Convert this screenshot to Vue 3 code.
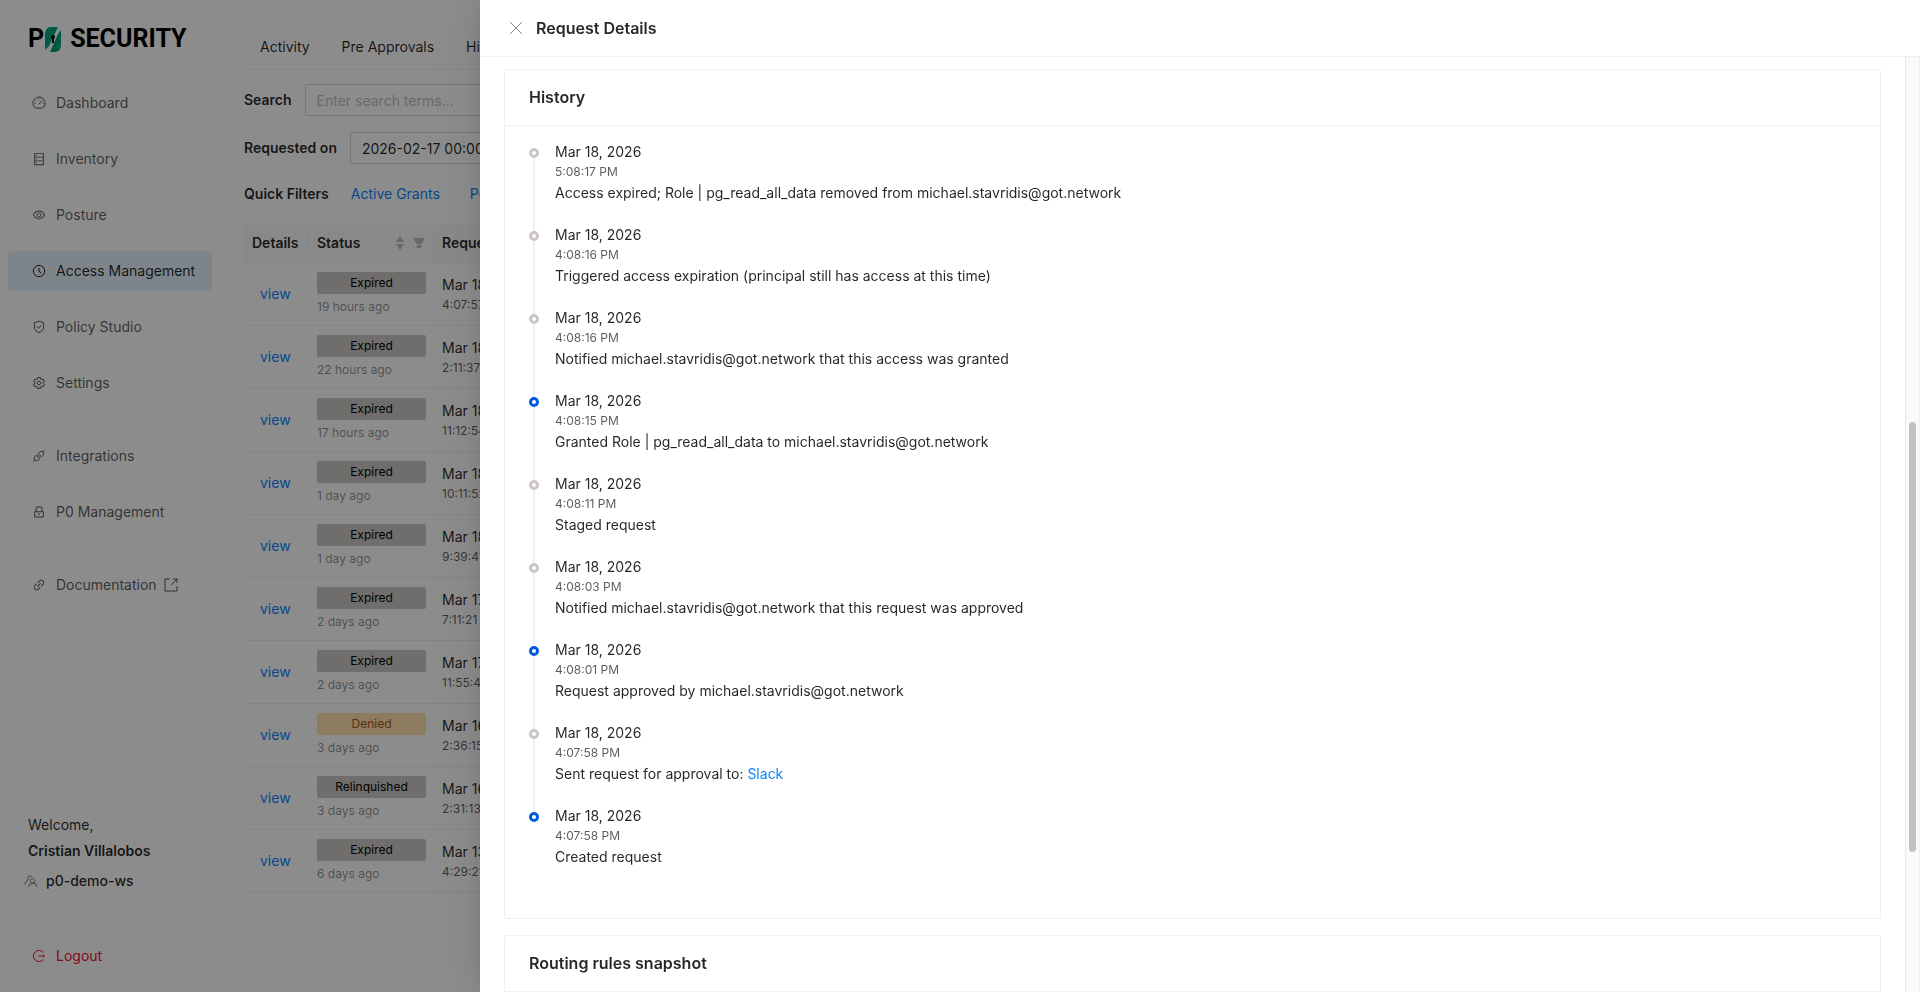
<template>
  <div class="layout">
    <aside class="sidebar">
      <a class="logo" href="#" aria-label="P0 Security">
        <span class="logo-text">P</span>
        <svg class="logo-mark" viewBox="0 0 18 25" aria-hidden="true">
          <path d="M7 0H14L5 19 1 23V8Q1 0 7 0z" />
          <path d="M11 25H6L14 7l3-4v14q0 8-6 8z" />
          <circle class="keyhole" cx="9" cy="10" r="2" />
          <path class="keyhole" d="M8 10h2v6H8z" />
        </svg>
        <span class="logo-text">SECURITY</span>
      </a>

      <nav class="menu">
        <ul v-for="(group, index) in menuGroups" :key="index" class="menu-group">
          <li v-for="item in group" :key="item.label">
            <a href="#" class="menu-item" :class="{ active: item.active }">
              <svg class="icon" :class="{ line: icons[item.icon].line }" viewBox="0 0 1024 1024">
                <path :d="icons[item.icon].d" />
              </svg>
              {{ item.label }}
              <svg v-if="item.external" class="external" viewBox="0 0 16 16">
                <path d="M7 2H2v12h12V9M8 8l6-6M10 2h4v4" />
              </svg>
            </a>
          </li>
        </ul>
      </nav>

      <div class="account">
        <div>Welcome,</div>
        <div class="user-name">Cristian Villalobos</div>
        <div class="workspace">
          <svg class="icon line" viewBox="0 0 1024 1024">
            <path :d="icons.team.d" />
          </svg>
          p0-demo-ws
        </div>
      </div>
      <button type="button" class="menu-item logout">
        <svg class="icon line" viewBox="0 0 1024 1024">
          <path :d="icons.logout.d" />
        </svg>
        Logout
      </button>
    </aside>

    <main class="content">
      <nav class="tabs">
        <a v-for="tab in tabs" :key="tab" href="#">{{ tab }}</a>
      </nav>
      <div class="field">
        <label for="search">Search</label>
        <input id="search" v-model="search" type="text" placeholder="Enter search terms...">
      </div>
      <div class="field">
        <label for="requested-on">Requested on</label>
        <input id="requested-on" v-model="requestedOn" type="text">
      </div>
      <div class="quick-filters">
        <strong>Quick Filters</strong>
        <a href="#">Active Grants</a>
        <a href="#">Pending</a>
      </div>

      <table class="requests">
        <thead>
          <tr>
            <th class="col-details">Details</th>
            <th class="col-status">
              <div class="th-inner">
                <span>Status</span>
                <svg class="sorter" viewBox="0 0 8 14">
                  <path d="M4 0l4 6H0zM4 14l4-6H0z" />
                </svg>
                <svg class="filter" viewBox="0 0 1024 1024">
                  <path :d="icons.filter.d" />
                </svg>
              </div>
            </th>
            <th>Requested</th>
          </tr>
        </thead>
        <tbody>
          <tr v-for="(row, index) in requests" :key="index">
            <td class="view-cell"><a href="#">view</a></td>
            <td>
              <div class="tag" :class="{ denied: row.status === 'Denied' }">{{ row.status }}</div>
              <div class="ago">{{ row.ago }}</div>
            </td>
            <td>
              <div>{{ row.date }}</div>
              <div class="time">{{ row.time }}</div>
            </td>
          </tr>
        </tbody>
      </table>
    </main>

    <div class="mask"></div>

    <section class="drawer" role="dialog" aria-labelledby="drawer-title">
      <header class="drawer-header">
        <button type="button" class="close" aria-label="Close">
          <svg viewBox="0 0 14 14"><path d="M1 1l12 12M13 1L1 13" /></svg>
        </button>
        <h1 id="drawer-title">Request Details</h1>
      </header>
      <div class="drawer-body">
        <div class="cards">
          <section class="card">
            <h2>History</h2>
            <ul class="timeline">
              <li v-for="(event, index) in history" :key="index">
                <div class="rail">
                  <span class="dot" :class="{ primary: event.primary }"></span>
                </div>
                <div class="event">
                  <div>Mar 18, 2026</div>
                  <div class="time">{{ event.time }}</div>
                  <div>{{ event.text }}<a v-if="event.link" href="#">{{ event.link }}</a></div>
                </div>
              </li>
            </ul>
          </section>
          <section class="card">
            <h2>Routing rules snapshot</h2>
          </section>
        </div>
        <div class="scroll-track">
          <div class="scroll-thumb"></div>
        </div>
      </div>
    </section>
  </div>
</template>

<script setup>
import { ref } from 'vue'

const search = ref('')
const requestedOn = ref('2026-02-17 00:00')

const menuGroups = [
  [
    { label: 'Dashboard', icon: 'dashboard' },
    { label: 'Inventory', icon: 'database' },
    { label: 'Posture', icon: 'eye' },
    { label: 'Access Management', icon: 'clock', active: true },
    { label: 'Policy Studio', icon: 'shield' },
    { label: 'Settings', icon: 'setting' }
  ],
  [
    { label: 'Integrations', icon: 'api' },
    { label: 'P0 Management', icon: 'lock' }
  ],
  [
    { label: 'Documentation', icon: 'link', external: true }
  ]
]

const tabs = ['Activity', 'Pre Approvals', 'History']

const requests = [
  { status: 'Expired', ago: '19 hours ago', date: 'Mar 18, 2026', time: '4:07:57 PM' },
  { status: 'Expired', ago: '22 hours ago', date: 'Mar 18, 2026', time: '2:11:37 PM' },
  { status: 'Expired', ago: '17 hours ago', date: 'Mar 18, 2026', time: '11:12:54 AM' },
  { status: 'Expired', ago: '1 day ago', date: 'Mar 18, 2026', time: '10:11:52 AM' },
  { status: 'Expired', ago: '1 day ago', date: 'Mar 18, 2026', time: '9:39:41 AM' },
  { status: 'Expired', ago: '2 days ago', date: 'Mar 17, 2026', time: '7:11:21 PM' },
  { status: 'Expired', ago: '2 days ago', date: 'Mar 17, 2026', time: '11:55:43 AM' },
  { status: 'Denied', ago: '3 days ago', date: 'Mar 16, 2026', time: '2:36:15 PM' },
  { status: 'Relinquished', ago: '3 days ago', date: 'Mar 16, 2026', time: '2:31:13 PM' },
  { status: 'Expired', ago: '6 days ago', date: 'Mar 13, 2026', time: '4:29:21 PM' }
]

const history = [
  { time: '5:08:17 PM', text: 'Access expired; Role | pg_read_all_data removed from michael.stavridis@got.network' },
  { time: '4:08:16 PM', text: 'Triggered access expiration (principal still has access at this time)' },
  { time: '4:08:16 PM', text: 'Notified michael.stavridis@got.network that this access was granted' },
  { time: '4:08:15 PM', text: 'Granted Role | pg_read_all_data to michael.stavridis@got.network', primary: true },
  { time: '4:08:11 PM', text: 'Staged request' },
  { time: '4:08:03 PM', text: 'Notified michael.stavridis@got.network that this request was approved' },
  { time: '4:08:01 PM', text: 'Request approved by michael.stavridis@got.network', primary: true },
  { time: '4:07:58 PM', text: 'Sent request for approval to: ', link: 'Slack' },
  { time: '4:07:58 PM', text: 'Created request', primary: true }
]

const icons = {
  dashboard: {
    line: true,
    d: 'M250 880A445 445 0 1 1 774 880zM490 610L700 370M512 190v80M190 540h80M754 540h80M285 315l50 50M690 270l40 50'
  },
  database: {
    d: 'M832 64H192c-17.7 0-32 14.3-32 32v832c0 17.7 14.3 32 32 32h640c17.7 0 32-14.3 32-32V96c0-17.7-14.3-32-32-32zm-600 72h560v208H232V136zm560 480H232V408h560v208zm0 272H232V680h560v208zM304 240a40 40 0 1080 0 40 40 0 10-80 0zm0 272a40 40 0 1080 0 40 40 0 10-80 0zm0 272a40 40 0 1080 0 40 40 0 10-80 0z'
  },
  eye: {
    d: 'M942.2 486.2C847.4 286.5 704.1 186 512 186c-192.2 0-335.4 100.5-430.2 300.3a60.3 60.3 0 000 51.5C176.6 737.5 319.9 838 512 838c192.2 0 335.4-100.5 430.2-300.3 7.7-16.2 7.7-35 0-51.5zM512 766c-161.3 0-279.4-81.8-362.7-254C232.6 339.8 350.7 258 512 258c161.3 0 279.4 81.8 362.7 254C791.5 684.2 673.4 766 512 766zm-4-430c-97.2 0-176 78.8-176 176s78.8 176 176 176 176-78.8 176-176-78.8-176-176-176zm0 288c-61.9 0-112-50.1-112-112s50.1-112 112-112 112 50.1 112 112-50.1 112-112 112z'
  },
  clock: {
    line: true,
    d: 'M512 100a412 412 0 1 0 1 0zM512 280v260l160 115'
  },
  shield: {
    line: true,
    d: 'M512 90L850 205v420Q850 760 512 935Q174 760 174 625V205zM350 490l125 125 200-240'
  },
  setting: {
    line: true,
    d: 'M405 111H619L612 203 729 270 805 219 913 405 830 444V580L913 619 805 805 729 754 612 821 619 913H405L412 821 295 754 219 805 111 619 194 580V444L111 405 219 219 295 270 412 203zM512 375a137 137 0 1 0 1 0z'
  },
  api: {
    line: true,
    d: 'M90 934l110-110M934 90L824 200M450 320l250 250 110-110a177 177 0 0 0-250-250zM320 450l250 250-110 110a177 177 0 0 1-250-250zM400 530l80-80M495 625l80-80'
  },
  lock: {
    d: 'M832 464h-68V240c0-70.7-57.3-128-128-128H388c-70.7 0-128 57.3-128 128v224h-68c-17.7 0-32 14.3-32 32v384c0 17.7 14.3 32 32 32h640c17.7 0 32-14.3 32-32V496c0-17.7-14.3-32-32-32zM332 240c0-30.9 25.1-56 56-56h248c30.9 0 56 25.1 56 56v224H332V240zm460 600H232V536h560v304zM484 701v53c0 4.4 3.6 8 8 8h40c4.4 0 8-3.6 8-8v-53a48.01 48.01 0 10-56 0z'
  },
  link: {
    d: 'M574 665.4a8.03 8.03 0 00-11.3 0L446.5 781.6c-53.8 53.8-144.6 59.5-204 0-59.5-59.5-53.8-150.2 0-204l116.2-116.2c3.1-3.1 3.1-8.2 0-11.3l-39.8-39.8a8.03 8.03 0 00-11.3 0L191.4 526.5c-84.6 84.6-84.6 221.5 0 306s221.5 84.6 306 0l116.2-116.2c3.1-3.1 3.1-8.2 0-11.3L574 665.4zm258.6-474c-84.6-84.6-221.5-84.6-306 0L410.3 307.6a8.03 8.03 0 000 11.3l39.7 39.7c3.1 3.1 8.2 3.1 11.3 0l116.2-116.2c53.8-53.8 144.6-59.5 204 0 59.5 59.5 53.8 150.2 0 204L665.3 562.6a8.03 8.03 0 000 11.3l39.8 39.8c3.1 3.1 8.2 3.1 11.3 0l116.2-116.2c84.5-84.6 84.5-221.5 0-306.1zM610.1 372.3a8.03 8.03 0 00-11.3 0L372.3 598.7a8.03 8.03 0 000 11.3l39.6 39.6c3.1 3.1 8.2 3.1 11.3 0l226.4-226.4c3.1-3.1 3.1-8.2 0-11.3l-39.5-39.6z'
  },
  team: {
    line: true,
    d: 'M640 330a165 165 0 1 0 1 0zM330 950Q350 670 640 660Q930 670 950 950M600 220A175 175 0 1 0 330 440M70 770Q90 520 330 440'
  },
  logout: {
    line: true,
    d: 'M830 250A410 410 0 1 0 830 774M460 512H900M800 430L910 512 800 594'
  },
  filter: {
    d: 'M349 838c0 17.7 14.2 32 31.8 32h262.4c17.6 0 31.8-14.3 31.8-32V642H349v196zm531.1-684H143.9c-24.5 0-39.8 26.7-27.5 48l221.3 376h348.8l221.3-376c12.1-21.3-3.2-48-27.7-48z'
  }
}
</script>

<style>
body {
  margin: 0;
  overflow: hidden;
}
</style>

<style scoped>
* {
  box-sizing: border-box;
}

.layout {
  display: flex;
  height: 100vh;
  background: #fff;
  color: rgba(0, 0, 0, 0.85);
  font-family: Inter, "Liberation Sans", sans-serif;
  font-size: 14px;
  line-height: 22px;
}

a {
  color: #0a84ff;
  text-decoration: none;
}

ul {
  list-style: none;
  margin: 0;
  padding: 0;
}

button {
  border: none;
  background: none;
  font: inherit;
  cursor: pointer;
}

.sidebar {
  display: flex;
  flex-direction: column;
  flex: 0 0 220px;
  min-width: 0;
  padding: 25px 8px 16px;
}

.logo {
  display: flex;
  align-items: center;
  height: 28px;
  margin: 0 20px 30px;
  color: #000;
}

.logo-text {
  font-family: Roboto, "Liberation Sans", sans-serif;
  font-size: 25px;
  font-weight: 700;
}

.logo-mark {
  flex: none;
  width: 18px;
  height: 25px;
  margin-right: 8px;
  fill: #00a67e;
}

.logo-mark .keyhole {
  fill: #000;
}

.menu-group {
  display: flex;
  flex-direction: column;
  gap: 16px;
}

.menu-group + .menu-group {
  margin-top: 33px;
}

.menu-item {
  display: flex;
  align-items: center;
  gap: 10px;
  height: 40px;
  padding: 0 24px;
  border-radius: 4px;
  color: rgba(0, 0, 0, 0.65);
  white-space: nowrap;
}

.menu-item.active {
  background: #e3f2fd;
  color: rgba(0, 0, 0, 0.85);
}

.icon {
  flex: none;
  width: 14px;
  height: 14px;
  fill: currentColor;
}

.icon.line {
  fill: none;
  stroke: currentColor;
  stroke-width: 72;
  stroke-linejoin: round;
}

.external {
  width: 16px;
  height: 16px;
  margin-left: -4px;
  fill: none;
  stroke: currentColor;
}

.account {
  display: flex;
  flex-direction: column;
  gap: 4px;
  margin-top: auto;
  padding: 0 20px;
}

.user-name {
  font-weight: 600;
}

.workspace {
  display: flex;
  align-items: center;
  gap: 8px;
  margin: 4px 0 0 -4px;
  font-weight: 500;
}

.workspace .icon {
  opacity: 0.6;
}

.logout {
  margin-top: 44px;
  color: #ee1133;
}

.content {
  flex: 1;
  min-width: 0;
  padding: 24px;
}

.tabs {
  display: flex;
  gap: 32px;
  margin-bottom: 14px;
  padding: 12px 16px 11px;
  border-bottom: 1px solid #f0f0f0;
}

.tabs a {
  color: inherit;
}

.field {
  display: flex;
  align-items: center;
  gap: 13px;
  margin-bottom: 16px;
}

.field label {
  font-weight: 600;
}

.field input {
  width: 360px;
  height: 32px;
  padding: 0 11px;
  border: 1px solid #d9d9d9;
  border-radius: 2px;
  color: inherit;
  font: inherit;
}

.field input::placeholder {
  color: #bfbfbf;
}

.quick-filters {
  display: flex;
  margin: 19px 0;
}

.quick-filters strong {
  font-weight: 600;
  margin-right: 22px;
}

.quick-filters a {
  margin-right: 30px;
}

.requests {
  width: 100%;
  table-layout: fixed;
  border-collapse: separate;
  border-spacing: 0;
}

.requests th {
  height: 39px;
  padding: 8px;
  border-bottom: 1px solid #f0f0f0;
  background: #fafafa;
  font-weight: 600;
  text-align: left;
}

.col-details {
  width: 65px;
}

.col-status {
  width: 125px;
}

/* short divider between header cells */
.requests th:not(:last-child) {
  background: linear-gradient(#f0f0f0, #f0f0f0) right center / 1px 22px no-repeat #fafafa;
}

.th-inner {
  display: flex;
  align-items: center;
}

.th-inner span {
  flex: 1;
}

.th-inner svg {
  fill: #bfbfbf;
}

.sorter {
  width: 8px;
  height: 14px;
  margin-right: 8px;
}

.filter {
  width: 14px;
  height: 14px;
}

.requests td {
  height: 63px;
  padding: 8px;
  border-bottom: 1px solid #f0f0f0;
}

.requests .view-cell {
  padding-left: 16px;
}

.tag {
  border-radius: 2px;
  background: #ccc8c5;
  color: #000;
  font-size: 12px;
  text-align: center;
}

.tag.denied {
  background: #ffe0ae;
  color: #a85a20;
}

.ago {
  margin-top: 4px;
  color: rgba(0, 0, 0, 0.45);
  font-size: 12px;
  line-height: 18px;
}

.time {
  color: rgba(0, 0, 0, 0.65);
  font-size: 12px;
  line-height: 18px;
}

.mask {
  position: fixed;
  inset: 0;
  background: rgba(0, 0, 0, 0.45);
}

.drawer {
  position: fixed;
  top: 0;
  right: 0;
  bottom: 0;
  display: flex;
  flex-direction: column;
  width: 75%;
  background: #fff;
  box-shadow: -6px 0 16px -8px rgba(0, 0, 0, 0.08), -9px 0 28px 0 rgba(0, 0, 0, 0.05), -12px 0 48px 16px rgba(0, 0, 0, 0.03);
}

.drawer-header {
  display: flex;
  align-items: center;
  flex: none;
  gap: 13px;
  height: 57px;
  padding: 0 29px;
  border-bottom: 1px solid #f0f0f0;
}

h1,
h2 {
  margin: 0;
  font-size: 16px;
  font-weight: 600;
  line-height: 22px;
}

.close {
  display: flex;
  padding: 0;
}

.close svg {
  width: 14px;
  height: 14px;
  fill: none;
  stroke: #8c8c8c;
}

.drawer-body {
  display: flex;
  flex: 1;
  min-height: 0;
}

.cards {
  display: flex;
  flex: 1;
  flex-direction: column;
  gap: 16px;
  overflow: hidden;
  padding: 12px 24px 0;
}

.card {
  flex: none;
  border: 1px solid #f0f0f0;
  border-radius: 2px;
}

.card h2 {
  padding: 16px 24px 17px;
  border-bottom: 1px solid #f0f0f0;
}

.timeline {
  padding: 15px 24px 30px;
}

.timeline li {
  display: flex;
  gap: 16px;
}

.rail {
  display: flex;
  flex-direction: column;
  align-items: center;
  margin: 7px 0 -7px;
}

.rail::after {
  content: '';
  flex: 1;
  width: 2px;
  background: #f0f0f0;
}

.timeline li:last-child .rail::after {
  background: none;
}

.dot {
  width: 10px;
  height: 10px;
  border: 3px solid #ccc5c5;
  border-radius: 50%;
}

.dot.primary {
  border-color: #005bdb;
}

.event {
  padding-bottom: 20px;
}

.event .time {
  margin-bottom: 1px;
}

.scroll-track {
  flex: none;
  width: 15px;
  padding: 0 3px;
  border-left: 1px solid #e8e8e8;
  border-right: 1px solid #f0f0f0;
  background: #fafafa;
}

.scroll-thumb {
  height: 46%;
  margin-top: 365px;
  border-radius: 4px;
  background: #c1c1c1;
}
</style>
